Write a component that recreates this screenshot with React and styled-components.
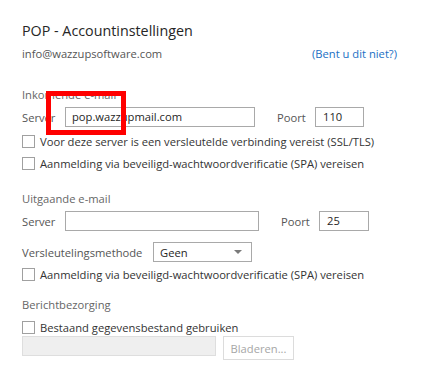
import React from 'react';
import styled, { createGlobalStyle } from 'styled-components';

const GlobalStyle = createGlobalStyle`
  body {
    margin: 0;
    background: #ffffff;
    font-family: "Open Sans", "Noto Sans", sans-serif;
    font-size: 11.2px;
    color: #333333;
  }
`

const PAGE = styled.div`
  display: flex;
  flex-direction: column;
  padding: 21px 0 0 22px;
  width: 375px;
`

const TITLE = styled.h1`
  margin: 0;
  height: 20px;
  line-height: 20px;
  font-size: 14.3px;
  font-weight: 400;
  color: #262626;
`

const ACCOUNTROW = styled.div`
  display: flex;
  justify-content: space-between;
  align-items: center;
  height: 18px;
  margin-top: 3px;
  color: #555555;
`

const LINK = styled.a`
  color: #1a6fc4;
  text-decoration: none;
  cursor: pointer;
`

const HEADING = styled.div`
  height: 16px;
  line-height: 16px;
  margin-top: ${p => p.$gap}px;
  color: #666666;
`

const ROW = styled.div`
  position: relative;
  display: flex;
  align-items: ${p => p.$align || 'center'};
  gap: ${p => p.$gap || 0}px;
  height: ${p => p.$height || 20}px;
  margin-top: ${p => p.$top}px;
`

const LABEL = styled.span`
  width: ${p => p.$width}px;
  margin-left: ${p => p.$space || 0}px;
  flex-shrink: 0;
  color: #555555;
`

const INPUT = styled.div`
  box-sizing: border-box;
  width: ${p => p.$width}px;
  height: 20px;
  padding: 0 ${p => p.$pad || 6}px;
  border: 1px solid #a9a9a9;
  background: #ffffff;
  line-height: 18px;
  color: #262626;
  white-space: nowrap;
`

const SELECT = styled.div`
  box-sizing: border-box;
  display: flex;
  align-items: center;
  justify-content: space-between;
  width: 99px;
  height: 20px;
  padding: 0 9px 0 6px;
  border: 1px solid #a9a9a9;
  color: #262626;
`

const ARROW = styled.span`
  width: 0;
  height: 0;
  border-left: 4px solid transparent;
  border-right: 4px solid transparent;
  border-top: 4px solid #7a7a7a;
`

const CHECKROW = styled.label`
  display: flex;
  align-items: center;
  gap: 5px;
  height: ${p => p.$height || 18}px;
  margin-top: ${p => p.$top}px;
  color: #333333;
`

const BOX = styled.span`
  box-sizing: border-box;
  width: 13px;
  height: 13px;
  border: 1px solid #a0a0a0;
  background: #ffffff;
`

// red annotation drawn over the incoming server field
const HIGHLIGHT = styled.div`
  position: absolute;
  left: 24px;
  top: -16px;
  width: 80px;
  height: 44px;
  box-sizing: border-box;
  border: 5px solid #ff0000;
  pointer-events: none;
`

const DISABLEDFIELD = styled.div`
  box-sizing: border-box;
  width: 194px;
  height: 20px;
  background: #efefef;
  border: 1px solid #dedede;
`

const BUTTON = styled.button`
  box-sizing: border-box;
  width: 71px;
  height: 24px;
  padding: 0;
  background: #ffffff;
  border: 1px solid #dcdcdc;
  font: inherit;
  color: #a6a6a6;
`

const Check = ({ top, height, children }) => (
    <CHECKROW $top={top} $height={height}>
        <BOX />
        {children}
    </CHECKROW>
);

const App = () => {
    return (
        <>
            <GlobalStyle />
            <PAGE>
                <TITLE>POP - Accountinstellingen</TITLE>
                <ACCOUNTROW>
                    <span>info@wazzupsoftware.com</span>
                    <LINK>(Bent u dit niet?)</LINK>
                </ACCOUNTROW>

                <HEADING $gap={25}>Inkomende e-mail</HEADING>
                <ROW $top={4}>
                    <LABEL $width={43}>Server</LABEL>
                    <INPUT $width={190}>pop.wazzupmail.com</INPUT>
                    <LABEL $width={38} $space={22}>Poort</LABEL>
                    <INPUT $width={49} $pad={7}>110</INPUT>
                    <HIGHLIGHT />
                </ROW>
                <Check top={5}>Voor deze server is een versleutelde verbinding vereist (SSL/TLS)</Check>
                <Check top={4}>Aanmelding via beveiligd-wachtwoordverificatie (SPA) vereisen</Check>

                <HEADING $gap={19}>Uitgaande e-mail</HEADING>
                <ROW $top={4}>
                    <LABEL $width={43}>Server</LABEL>
                    <INPUT $width={194} />
                    <LABEL $width={38} $space={22}>Poort</LABEL>
                    <INPUT $width={50} $pad={7}>25</INPUT>
                </ROW>
                <ROW $top={11} $gap={10}>
                    <LABEL $width={121}>Versleutelingsmethode</LABEL>
                    <SELECT>
                        <span>Geen</span>
                        <ARROW />
                    </SELECT>
                </ROW>
                <Check top={3}>Aanmelding via beveiligd-wachtwoordverificatie (SPA) vereisen</Check>

                <HEADING $gap={14}>Berichtbezorging</HEADING>
                <Check top={6} height={16}>Bestaand gegevensbestand gebruiken</Check>
                <ROW $top={1} $gap={7} $height={24} $align="flex-start">
                    <DISABLEDFIELD />
                    <BUTTON disabled>Bladeren...</BUTTON>
                </ROW>
            </PAGE>
        </>
    );
};

export default App;
